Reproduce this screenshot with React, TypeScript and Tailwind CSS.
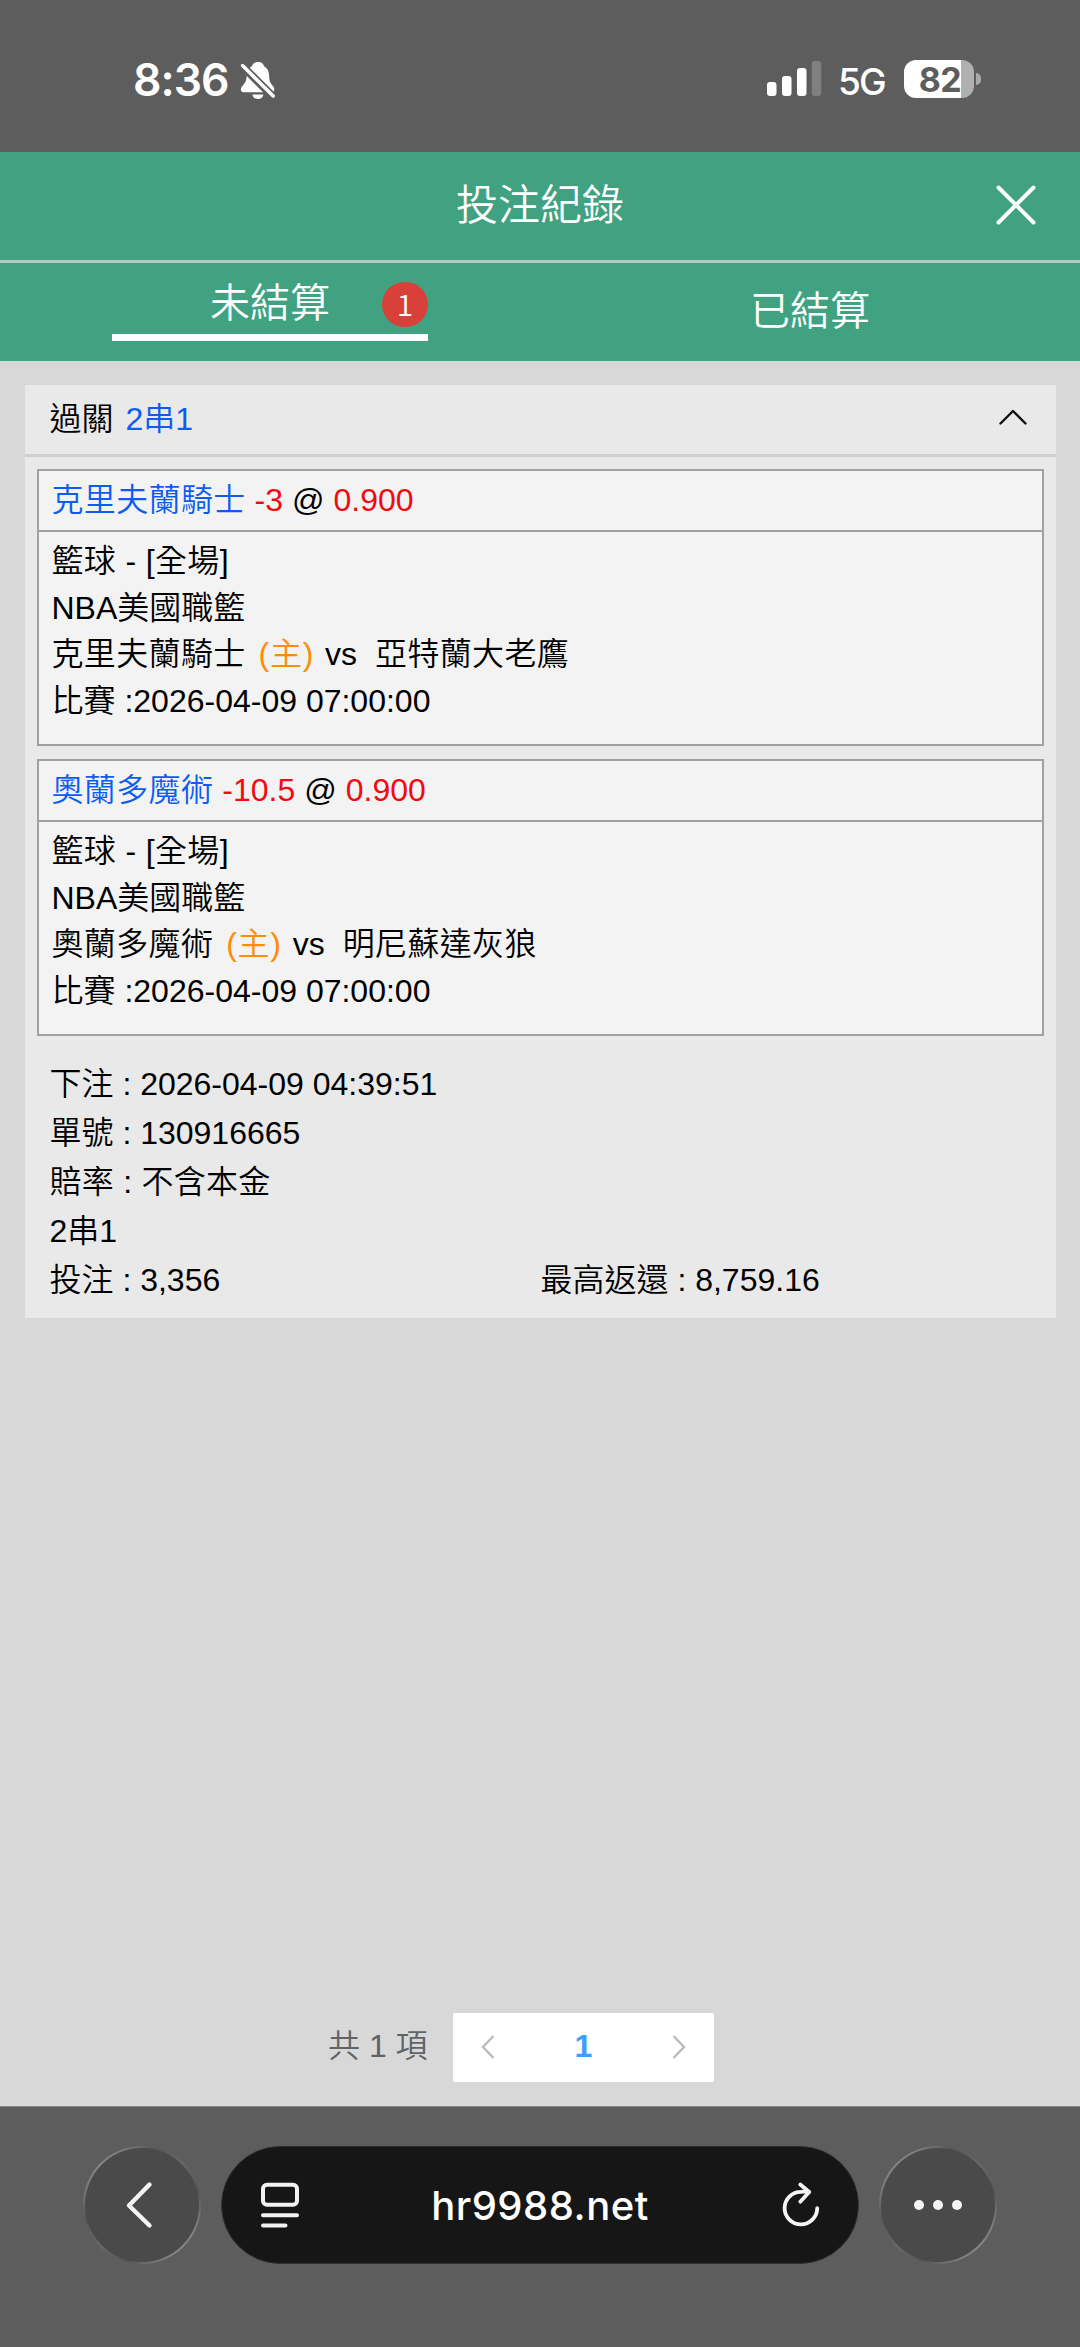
import React from "react";

type Bet = { team: string; line: string; odds: string; away: string; time: string };

const bets: Bet[] = [
  { team: "克里夫蘭騎士", line: "-3", odds: "0.900", away: "亞特蘭大老鷹", time: "2026-04-09 07:00:00" },
  { team: "奧蘭多魔術", line: "-10.5", odds: "0.900", away: "明尼蘇達灰狼", time: "2026-04-09 07:00:00" },
];

function StatusBar() {
  return (
    <div className="flex h-[152px] justify-between bg-[#5d5d5d] pr-[99px] pl-[133px] font-['Inter',sans-serif] text-white">
      <div className="flex h-[160px] items-center">
        <span className="w-[107px] text-[44.5px] leading-none font-semibold tracking-[-1px]">8:36</span>
        <svg className="h-[38px] w-[36px]" viewBox="0 0 36 38" fill="none">
          <path
            d="M18 1C14.2 1 12.6 3.2 11.9 5.2C8.2 7 6.8 10.4 6.7 14.6C6.5 20.6 4.9 22.3 2.2 25.2C.2 27.4 .3 31.2 3.6 31.2H31.6C35 31.2 35 27.4 33 25.2C30.4 22.3 29.3 20.6 29.1 14.6C29 10.4 27.6 7 24.1 5.2C23.4 3.2 21.8 1 18 1Z"
            fill="white"
          />
          <path d="M12.3 33.4H23.4C22.8 36.3 20.8 38 17.9 38C15 38 12.9 36.3 12.3 33.4Z" fill="white" />
          <path d="M0 2.6L34 36.6" stroke="#5d5d5d" strokeWidth="8" />
          <path d="M2.6 4.6L33.2 35" stroke="white" strokeWidth="3.5" strokeLinecap="round" />
        </svg>
      </div>
      <div className="flex h-[158px] items-center">
        <svg className="mr-[16px] h-[36px] w-[55px]" viewBox="0 0 55 36" fill="white">
          <rect x="0" y="21" width="9.5" height="14" rx="3" />
          <rect x="15" y="15" width="9.5" height="20" rx="3" />
          <rect x="30" y="7" width="9.5" height="28" rx="3" />
          <rect x="44.8" y="0" width="9.5" height="35" rx="3" opacity="0.22" />
        </svg>
        <span className="mt-[5px] w-[66px] text-[37px] leading-none font-medium tracking-[-1.8px]">5G</span>
        <div className="flex items-center gap-[2px]">
          <div className="flex h-[38px] w-[70px] items-center justify-center rounded-[12px] bg-[linear-gradient(to_right,#fff_57px,#b0b0b0_57px)] pl-[2px] text-[34px] leading-[37px] font-bold tracking-[-0.6px] text-[#5d5d5d]">
            82
          </div>
          <div className="h-[12px] w-[5px] rounded-r-full bg-[#a9a9a9]" />
        </div>
      </div>
    </div>
  );
}

function Header() {
  return (
    <>
      <div className="flex h-[108px] items-center justify-center bg-[#40a280] text-[42px] leading-none text-white">
        <div className="w-[84px]" />
        <h1 className="flex-1 text-center font-[350]">投注紀錄</h1>
        <button className="flex w-[84px] justify-start pb-[3px]" aria-label="close">
          <svg className="h-[40px] w-[40px]" viewBox="0 0 40 40" fill="none" stroke="white" strokeWidth="4" strokeLinecap="round">
            <path d="M2.5 2.5L37.5 37.5M37.5 2.5L2.5 37.5" />
          </svg>
        </button>
      </div>
      <div className="h-[3px] bg-[#b3c9c0]" />
      <div className="flex h-[98px] bg-[#40a280] text-[40px] leading-none font-[350] text-white">
        <div className="flex w-1/2 justify-center pt-[12px]">
          <div className="relative flex h-[66px] w-[316px] justify-center border-b-[7px] border-white pt-[8px]">
            <span>未結算</span>
            <span className="absolute top-[7px] right-0 flex h-[45px] w-[46px] items-center justify-center rounded-full bg-[#d9403a] pb-[4px] font-['Noto_Sans_CJK_TC',sans-serif] text-[30px]">
              1
            </span>
          </div>
        </div>
        <div className="flex w-1/2 items-center justify-center pb-[2px]">已結算</div>
      </div>
    </>
  );
}

function BetBox({ bet }: { bet: Bet }) {
  return (
    <div className="h-[277px] border-2 border-[#a1a1a1] bg-[#f3f3f3]">
      <div className="flex h-[61px] items-center gap-[9px] border-b-2 border-[#a1a1a1] pb-[2px] pl-[13px] whitespace-pre">
        <span className="tracking-[0.35px] text-[#0d5cf2]">{bet.team}</span>
        <span className="text-[#f20a0f]">{bet.line}</span>
        <span>@</span>
        <span className="text-[#f20a0f]">{bet.odds}</span>
      </div>
      <div className="pt-[6px] pl-[13px] leading-[46.6px] whitespace-pre">
        <p className="tracking-[0.35px]">籃球 - [全場]</p>
        <p>NBA美國職籃</p>
        <p className="tracking-[0.35px]">
          {bet.team}
          <span className="mr-[11px] ml-[13px] tracking-[0.7px] text-[#ff8c08]">(主)</span>
          <span className="mr-[18px] tracking-normal">vs</span>
          {bet.away}
        </p>
        <p>比賽 :{bet.time}</p>
      </div>
    </div>
  );
}

function BetCard() {
  return (
    <section className="mx-[24.5px] h-[933px] bg-[#e9e9e9] text-[32px] leading-none font-[350] text-black">
      <div className="flex h-[72px] items-center justify-between border-b-[3px] border-[#cfcfcf] pr-[29px] pb-[2px] pl-[25px]">
        <div className="flex gap-[12px]">
          <span>過關</span>
          <span className="text-[#0d5cf2]">2串1</span>
        </div>
        <svg className="mb-[4px] h-[16px] w-[28px]" viewBox="0 0 28 16" fill="none" stroke="#111" strokeWidth="2.4" strokeLinecap="round" strokeLinejoin="round">
          <path d="M1.5 14.5L14 2L26.5 14.5" />
        </svg>
      </div>
      <div className="flex flex-col gap-[13px] px-[12px] pt-[12px]">
        {bets.map((b) => (
          <BetBox key={b.team} bet={b} />
        ))}
      </div>
      <div className="pt-[24px] pl-[25px] leading-[49px] whitespace-pre">
        <p>下注 : 2026-04-09 04:39:51</p>
        <p>單號 : 130916665</p>
        <p className="tracking-[0.25px]">賠率 : 不含本金</p>
        <p>2串1</p>
        <div className="grid grid-cols-2">
          <p>投注 : 3,356</p>
          <p className="-ml-[12px]">最高返還 : 8,759.16</p>
        </div>
      </div>
    </section>
  );
}

function Pagination() {
  return (
    <div className="flex h-[69px] items-center pl-[328px] text-[32px] leading-none font-[350] text-[#606266]">
      <span className="w-[125px] pb-[3px]">共 1 項</span>
      <div className="flex h-[69px] w-[261px] items-center justify-between rounded-[2px] bg-white px-[28px]">
        <svg className="mb-[2px] h-[24px] w-[14px]" viewBox="0 0 14 24" fill="none" stroke="#b9bbc0" strokeWidth="2.4">
          <path d="M12.5 1L2 12L12.5 23" />
        </svg>
        <span className="pb-[3px] font-bold text-[#409eff]">1</span>
        <svg className="mb-[2px] h-[24px] w-[14px]" viewBox="0 0 14 24" fill="none" stroke="#b9bbc0" strokeWidth="2.4">
          <path d="M1.5 1L12 12L1.5 23" />
        </svg>
      </div>
    </div>
  );
}

function RoundButton({ children }: { children: React.ReactNode }) {
  return (
    <div className="h-[118px] w-[118px] rounded-full bg-[linear-gradient(135deg,#858585_15%,#555555_32%,#6a6a6a_50%,#555555_68%,#858585_85%)] p-[2px]">
      <div className="flex h-full w-full items-center justify-center rounded-full bg-[#4a4a4a]">{children}</div>
    </div>
  );
}

function BrowserBar() {
  return (
    <div className="flex h-[241px] items-start gap-[20px] border-t border-[#858585] bg-[#5d5d5d] pt-[39px] pl-[83px]">
      <RoundButton>
        <svg className="mr-[7px] h-[48px] w-[28px]" viewBox="0 0 28 48" fill="none" stroke="#f5f5f5" strokeWidth="4.4" strokeLinecap="round" strokeLinejoin="round">
          <path d="M24.5 3.5L4 24.5L24.5 44.5" />
        </svg>
      </RoundButton>
      <div className="flex h-[118px] w-[638px] items-center justify-between rounded-full border border-[#303030] bg-[#161616] pr-[36px] pl-[38px]">
        <svg className="h-[46px] w-[40px]" viewBox="0 0 40 46" fill="none" stroke="#f2f2f2" strokeWidth="4" strokeLinecap="round">
          <rect x="3" y="2.8" width="34" height="20" rx="4" />
          <path d="M3 33.2H37M3 43.4H25.5" />
        </svg>
        <span className="pt-[1px] font-['Inter',sans-serif] text-[40px] leading-none font-medium tracking-[0.5px] text-white">
          hr9988.net
        </span>
        <svg className="mb-[2px] h-[48px] w-[42px]" viewBox="0 0 42 48" fill="none" stroke="#f5f5f5" strokeWidth="3.8" strokeLinecap="round" strokeLinejoin="round">
          <path d="M37.2 28.2A16.3 16.3 0 1 1 20.9 11.8Q25 11.5 29 12" />
          <path d="M20.3 4.5L29.2 12L20.3 21.7" />
        </svg>
      </div>
      <RoundButton>
        <div className="flex gap-[9.6px]">
          <i className="h-[9.6px] w-[9.6px] rounded-full bg-[#f5f5f5]" />
          <i className="h-[9.6px] w-[9.6px] rounded-full bg-[#f5f5f5]" />
          <i className="h-[9.6px] w-[9.6px] rounded-full bg-[#f5f5f5]" />
        </div>
      </RoundButton>
    </div>
  );
}

export default function App() {
  return (
    <div className="flex h-[2347px] w-[1080px] flex-col overflow-hidden bg-[#d8d8d8] font-['Liberation_Sans','Noto_Sans_CJK_TC',sans-serif]">
      <StatusBar />
      <Header />
      <main className="flex flex-1 flex-col justify-between pt-[24px] pb-[24px]">
        <BetCard />
        <Pagination />
      </main>
      <BrowserBar />
    </div>
  );
}
